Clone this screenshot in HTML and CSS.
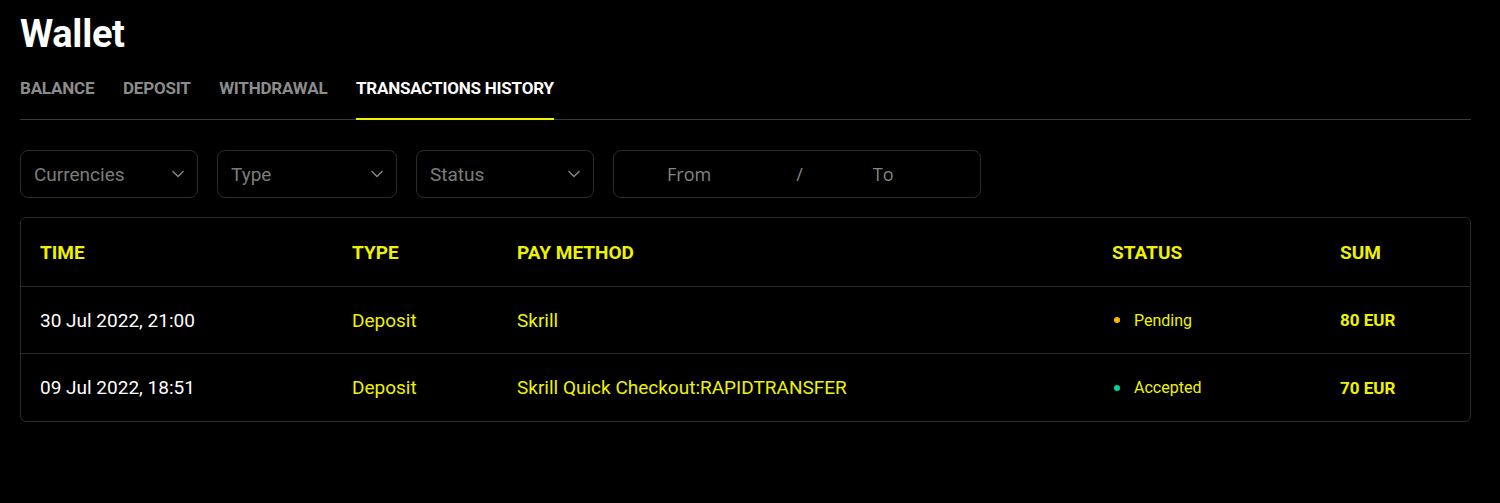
FILE: index.html
```html
<!DOCTYPE html>
<html>
<head>
<meta charset="utf-8">
<link rel="stylesheet" href="styles.css">
</head>
<body>
<div class="page">
  <h1 class="title">Wallet</h1>
  <nav class="tabs">
    <a class="tab">BALANCE</a>
    <a class="tab">DEPOSIT</a>
    <a class="tab">WITHDRAWAL</a>
    <a class="tab active">TRANSACTIONS HISTORY</a>
  </nav>
  <div class="filters">
    <div class="select"><span>Currencies</span><svg class="chev" width="12" height="8" viewBox="0 0 12 8"><path d="M0.5 1 L6 6.5 L11.5 1" fill="none" stroke="#8a8a8a" stroke-width="1.3"/></svg></div>
    <div class="select"><span>Type</span><svg class="chev" width="12" height="8" viewBox="0 0 12 8"><path d="M0.5 1 L6 6.5 L11.5 1" fill="none" stroke="#8a8a8a" stroke-width="1.3"/></svg></div>
    <div class="select"><span>Status</span><svg class="chev" width="12" height="8" viewBox="0 0 12 8"><path d="M0.5 1 L6 6.5 L11.5 1" fill="none" stroke="#8a8a8a" stroke-width="1.3"/></svg></div>
    <div class="dates"><span class="from">From</span><span class="slash">/</span><span class="to">To</span></div>
  </div>
  <div class="table">
    <div class="row head">
      <div>TIME</div><div>TYPE</div><div>PAY METHOD</div><div>STATUS</div><div>SUM</div>
    </div>
    <div class="row">
      <div class="time">30 Jul 2022, 21:00</div>
      <div class="y">Deposit</div>
      <div class="y">Skrill</div>
      <div class="status"><span class="dot pending"></span>Pending</div>
      <div class="sum">80 EUR</div>
    </div>
    <div class="row last">
      <div class="time">09 Jul 2022, 18:51</div>
      <div class="y">Deposit</div>
      <div class="y">Skrill Quick Checkout:RAPIDTRANSFER</div>
      <div class="status"><span class="dot accepted"></span>Accepted</div>
      <div class="sum">70 EUR</div>
    </div>
  </div>
</div>
</body>
</html>
```
FILE: styles.css
```css
* { box-sizing: border-box; }
html, body { margin: 0; background: #000; }
body { font-family: Roboto, "Liberation Sans", sans-serif; color: #fff; }
.page { padding: 10px 29px 0 20px; }
.title { margin: 0; font-size: 38px; font-weight: 700; line-height: 48px; letter-spacing: -0.3px; }
.tabs { display: flex; gap: 28.6px; border-bottom: 1px solid #3a3a3a; margin-top: 20px; }
.tab { font-size: 17px; font-weight: 700; color: #8c8c8c; line-height: 20px; padding-bottom: 22px; margin-bottom: -1px; letter-spacing: -0.2px; }
.tab.active { color: #fff; border-bottom: 2px solid #eef200; padding-bottom: 20px; }
.filters { display: flex; gap: 19px; margin-top: 30px; }
.select, .dates { height: 48px; border: 1px solid #2c2c2c; border-radius: 8px; display: flex; align-items: center; color: #7c7c7c; font-size: 19px; }
.select { width: 178px; padding: 0 13px 0 13px; justify-content: space-between; }
.select:nth-child(2) { width: 180px; }
.select:nth-child(3) { width: 178px; }
.dates { width: 368px; font-family: "Open Sans", sans-serif; font-size: 18px; color: #858585; }
.from { margin-left: 53px; }
.slash { margin-left: 85px; }
.to { margin-left: 70px; }
.table { margin-top: 19px; border: 1px solid #2a2a2a; border-radius: 6px; width: 1451px; }
.row { display: grid; grid-template-columns: 312px 165px 595px 228px 1fr; padding: 0 19px; height: 67px; align-items: center; font-size: 19px; border-top: 1px solid #2a2a2a; }
.row.last { height: 68px; }
.row.head { border-top: none; height: 68px; color: #eef200; font-weight: 700; font-size: 19px; }
.y { color: #eef200; }
.time { color: #fff; }
.status { color: #eef200; font-size: 16px; display: flex; align-items: center; }
.dot { width: 6px; height: 6px; border-radius: 50%; margin: 0 14px 0 2px; }
.dot.pending { background: #ffb800; }
.dot.accepted { background: #00d1a0; }
.sum { color: #eef200; font-weight: 700; font-size: 17px; }
```
